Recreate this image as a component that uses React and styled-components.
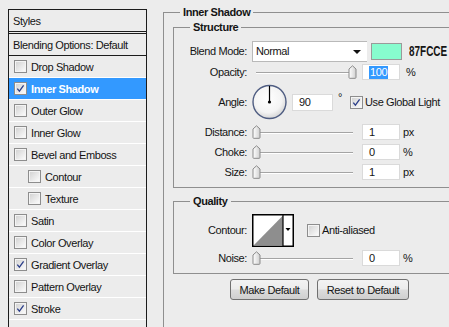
import React from "react";
import styled, { createGlobalStyle } from "styled-components";

const GlobalStyle = createGlobalStyle`
  html, body {
    margin: 0;
    padding: 0;
    background: #ececec;
    overflow: hidden;
  }
  body {
    font-family: "Liberation Sans", Arial, sans-serif;
    font-size: 11px;
    letter-spacing: -0.4px;
    color: #141414;
  }
`;

const Page = styled.div`
  display: flex;
  align-items: flex-start;
  width: 449px;
  height: 327px;
  overflow: hidden;
`;

/* ---------- left list ---------- */

const StylesList = styled.div`
  flex-shrink: 0;
  margin: 9px 0 0 8px;
  width: 137px;
  height: 340px;
  border-left: 1px solid #1c1c1c;
  border-right: 1px solid #1c1c1c;
`;

const HeaderRow = styled.div`
  display: flex;
  align-items: center;
  height: 21px;
  padding-left: 4px;
  border-top: 1px solid #1c1c1c;
  border-bottom: 1px solid #1c1c1c;
  margin-bottom: ${(p) => (p.$gap ? "1px" : "0")};
`;

const ItemRow = styled.div`
  display: flex;
  align-items: center;
  gap: 4px;
  height: 21px;
  padding-left: ${(p) => (p.$indent ? 19 : 5)}px;
  border-bottom: 1px solid #ffffff;
  background: ${(p) => (p.$active ? "#3399ff" : "transparent")};
  color: ${(p) => (p.$active ? "#ffffff" : "inherit")};
  font-weight: ${(p) => (p.$active ? "bold" : "normal")};
`;

const CheckSvg = styled.svg`
  flex-shrink: 0;
  display: block;
`;

const CheckBox = ({ checked }) => (
  <CheckSvg width="13" height="13" viewBox="0 0 13 13">
    <defs>
      <linearGradient id="cbfill" x1="0" y1="0" x2="1" y2="1">
        <stop offset="0" stopColor="#d4d4d4" />
        <stop offset="1" stopColor="#fafafa" />
      </linearGradient>
    </defs>
    <rect x="0.5" y="0.5" width="12" height="12" fill="#f4f4f4" stroke="#8d8d8d" />
    <rect x="2" y="2" width="9" height="9" fill="url(#cbfill)" />
    {checked && (
      <path d="M3.3 6.6 L5.4 9.2 L9.6 3.4" fill="none" stroke="#2c3f8a" strokeWidth="1.3" />
    )}
  </CheckSvg>
);

/* ---------- right panel ---------- */

const Group = styled.fieldset`
  margin: 0;
  padding: 0;
  border: 1px solid #8f8f8f;
  min-width: 0;
  width: ${(p) => p.$width}px;
  height: ${(p) => (p.$height ? `${p.$height}px` : "auto")};
  flex-shrink: 0;
`;

const GroupTitle = styled.legend`
  margin-left: 16px;
  padding: 0 3px;
  font-weight: bold;
  line-height: 14px;
`;

const OuterGroup = styled(Group)`
  margin: 5px 0 0 16px;
`;

const OuterBody = styled.div`
  padding: 1px 0 0 9px;
`;

const SectionBody = styled.div`
  padding: ${(p) => p.$pad};
`;

const QualityGroup = styled(Group)`
  margin-top: 6px;
`;

const Row = styled.div`
  display: flex;
  align-items: center;
  height: ${(p) => p.$h}px;
`;

const Label = styled.div`
  width: 73px;
  margin-right: 5px;
  text-align: right;
  flex-shrink: 0;
`;

const Select = styled.div`
  position: relative;
  display: flex;
  align-items: center;
  width: 111px;
  height: 19px;
  padding-left: 3px;
  box-sizing: content-box;
  background: #fff;
  border: 1px solid #b9b9b9;
  border-right: 0;
  &::after {
    content: "";
    position: absolute;
    right: 6px;
    top: 8px;
    border-left: 4px solid transparent;
    border-right: 4px solid transparent;
    border-top: 4px solid #111;
  }
`;

const Swatch = styled.div`
  width: 29px;
  height: 15px;
  margin-left: 4px;
  background: #87fcce;
  border: 1px solid #9a9a9a;
`;

const HexCode = styled.div`
  width: 40px;
  margin-left: 7px;
  font-weight: bold;
  font-size: 14px;
  letter-spacing: 0;
  color: #151515;
  white-space: nowrap;
  transform: scaleX(0.71);
  transform-origin: left center;
`;

const SliderBox = styled.div`
  position: relative;
  width: 105px;
  height: 14px;
  flex-shrink: 0;
`;

const Track = styled.div`
  position: absolute;
  left: 4px;
  right: 4px;
  top: 7px;
  height: 1px;
  background: #a4a4a4;
  border-bottom: 1px solid #ffffff;
`;

const ThumbSvg = styled.svg`
  position: absolute;
  top: 0;
  display: block;
`;

const Slider = ({ value }) => (
  <SliderBox>
    <Track />
    <ThumbSvg width="9" height="14" viewBox="0 0 9 14" style={{ left: `${value * 96}px` }}>
      <defs>
        <linearGradient id="thumb" x1="0" y1="0" x2="1" y2="0">
          <stop offset="0" stopColor="#ffffff" />
          <stop offset="1" stopColor="#d0d0d0" />
        </linearGradient>
      </defs>
      <path d="M1 4 L4.5 0.8 L8 4 L8 12.5 Q8 13.3 7.2 13.3 L1.8 13.3 Q1 13.3 1 12.5 Z" fill="url(#thumb)" stroke="#8a8a8a" strokeWidth="1" />
    </ThumbSvg>
  </SliderBox>
);

const Field = styled.div`
  display: flex;
  align-items: center;
  width: ${(p) => p.$w}px;
  height: ${(p) => p.$h}px;
  margin-left: ${(p) => p.$ml}px;
  padding-left: 6px;
  box-sizing: border-box;
  background: #fff;
  border: 1px solid #dadada;
  flex-shrink: 0;
`;

const Selected = styled.span`
  background: #3399ff;
  color: #fff;
  padding: 0 1px;
  line-height: 13px;
`;

const Unit = styled.div`
  margin-left: ${(p) => p.$ml || 4}px;
  align-self: ${(p) => (p.$raised ? "flex-start" : "center")};
  margin-top: ${(p) => (p.$raised ? "9px" : "0")};
`;

const DialSvg = styled.svg`
  display: block;
  flex-shrink: 0;
`;

const Dial = () => (
  <DialSvg width="35" height="36" viewBox="0 0 35 36">
    <defs>
      <radialGradient id="dialfill" cx="0.45" cy="0.4" r="0.6">
        <stop offset="0" stopColor="#ffffff" />
        <stop offset="0.7" stopColor="#f4f4f4" />
        <stop offset="1" stopColor="#d6d6d6" />
      </radialGradient>
    </defs>
    <circle cx="17.5" cy="18" r="16.5" fill="url(#dialfill)" stroke="#4f5d82" strokeWidth="1.4" />
    <line x1="17.5" y1="18" x2="17.5" y2="2" stroke="#000" strokeWidth="1.2" />
    <circle cx="17.5" cy="18" r="1.6" fill="#000" />
  </DialSvg>
);

const CheckLabel = styled.div`
  display: flex;
  align-items: center;
  gap: 2px;
  margin-left: ${(p) => p.$ml}px;
`;

const ContourSvg = styled.svg`
  display: block;
  flex-shrink: 0;
`;

const ContourPicker = () => (
  <ContourSvg width="42" height="33" viewBox="0 0 42 33">
    <rect x="0.75" y="0.75" width="40.5" height="31.5" fill="#fff" stroke="#000" strokeWidth="1.5" />
    <path d="M1.5 31.5 L31 1.5 L31 31.5 Z" fill="#8e8e8e" />
    <line x1="31" y1="1" x2="31" y2="32" stroke="#000" strokeWidth="1.2" />
    <path d="M33.5 14 L38.5 14 L36 17 Z" fill="#000" />
  </ContourSvg>
);

const ButtonRow = styled.div`
  display: flex;
  gap: 8px;
  margin: 5px 0 0 57px;
`;

const Button = styled.button`
  width: ${(p) => p.$w}px;
  height: 21px;
  padding: 0;
  font-family: "Liberation Sans", Arial, sans-serif;
  font-size: 11px;
  letter-spacing: -0.4px;
  color: #141414;
  border: 1px solid #707070;
  border-radius: 3px;
  background: linear-gradient(#f3f3f3 0%, #ececec 48%, #dcdcdc 52%, #cfcfcf 100%);
`;

const items = [
  { name: "Drop Shadow" },
  { name: "Inner Shadow", checked: true, active: true },
  { name: "Outer Glow" },
  { name: "Inner Glow" },
  { name: "Bevel and Emboss" },
  { name: "Contour", indent: true },
  { name: "Texture", indent: true },
  { name: "Satin" },
  { name: "Color Overlay" },
  { name: "Gradient Overlay", checked: true },
  { name: "Pattern Overlay" },
  { name: "Stroke", checked: true },
  { name: "" },
];

const sliders = [
  { label: "Distance:", value: 0, field: "1", unit: "px" },
  { label: "Choke:", value: 0, field: "0", unit: "%" },
  { label: "Size:", value: 0, field: "1", unit: "px" },
];

export default function App() {
  return (
    <>
      <GlobalStyle />
      <Page>
        <StylesList>
          <HeaderRow $gap>Styles</HeaderRow>
          <HeaderRow>Blending Options: Default</HeaderRow>
          {items.map((item, i) => (
            <ItemRow key={i} $indent={item.indent} $active={item.active}>
              {item.name && <CheckBox checked={item.checked} />}
              {item.name}
            </ItemRow>
          ))}
        </StylesList>

        <OuterGroup $width={330} $height={360}>
          <GroupTitle>Inner Shadow</GroupTitle>
          <OuterBody>
            <Group $width={300}>
              <GroupTitle>Structure</GroupTitle>
              <SectionBody $pad="6px 0 5px 0">
                <Row $h={22}>
                  <Label>Blend Mode:</Label>
                  <Select>Normal</Select>
                  <Swatch />
                  <HexCode>87FCCE</HexCode>
                </Row>
                <Row $h={20}>
                  <Label>Opacity:</Label>
                  <Slider value={1} />
                  <Field $w={38} $h={16} $ml={5}>
                    <Selected>100</Selected>
                  </Field>
                  <Unit $ml={6}>%</Unit>
                </Row>
                <Row $h={40}>
                  <Label>Angle:</Label>
                  <Dial />
                  <Field $w={41} $h={17} $ml={5}>90</Field>
                  <Unit $ml={5} $raised>°</Unit>
                  <CheckLabel $ml={8}>
                    <CheckBox checked />
                    Use Global Light
                  </CheckLabel>
                </Row>
                {sliders.map((s) => (
                  <Row $h={20} key={s.label}>
                    <Label>{s.label}</Label>
                    <Slider value={s.value} />
                    <Field $w={38} $h={16} $ml={5}>{s.field}</Field>
                    <Unit $ml={3}>{s.unit}</Unit>
                  </Row>
                ))}
              </SectionBody>
            </Group>

            <QualityGroup $width={300}>
              <GroupTitle>Quality</GroupTitle>
              <SectionBody $pad="4px 0 5px 0">
                <Row $h={36}>
                  <Label>Contour:</Label>
                  <ContourPicker />
                  <CheckLabel $ml={13}>
                    <CheckBox />
                    Anti-aliased
                  </CheckLabel>
                </Row>
                <Row $h={20}>
                  <Label>Noise:</Label>
                  <Slider value={0} />
                  <Field $w={38} $h={16} $ml={5}>0</Field>
                  <Unit $ml={3}>%</Unit>
                </Row>
              </SectionBody>
            </QualityGroup>

            <ButtonRow>
              <Button $w={79}>Make Default</Button>
              <Button $w={92}>Reset to Default</Button>
            </ButtonRow>
          </OuterBody>
        </OuterGroup>
      </Page>
    </>
  );
}
